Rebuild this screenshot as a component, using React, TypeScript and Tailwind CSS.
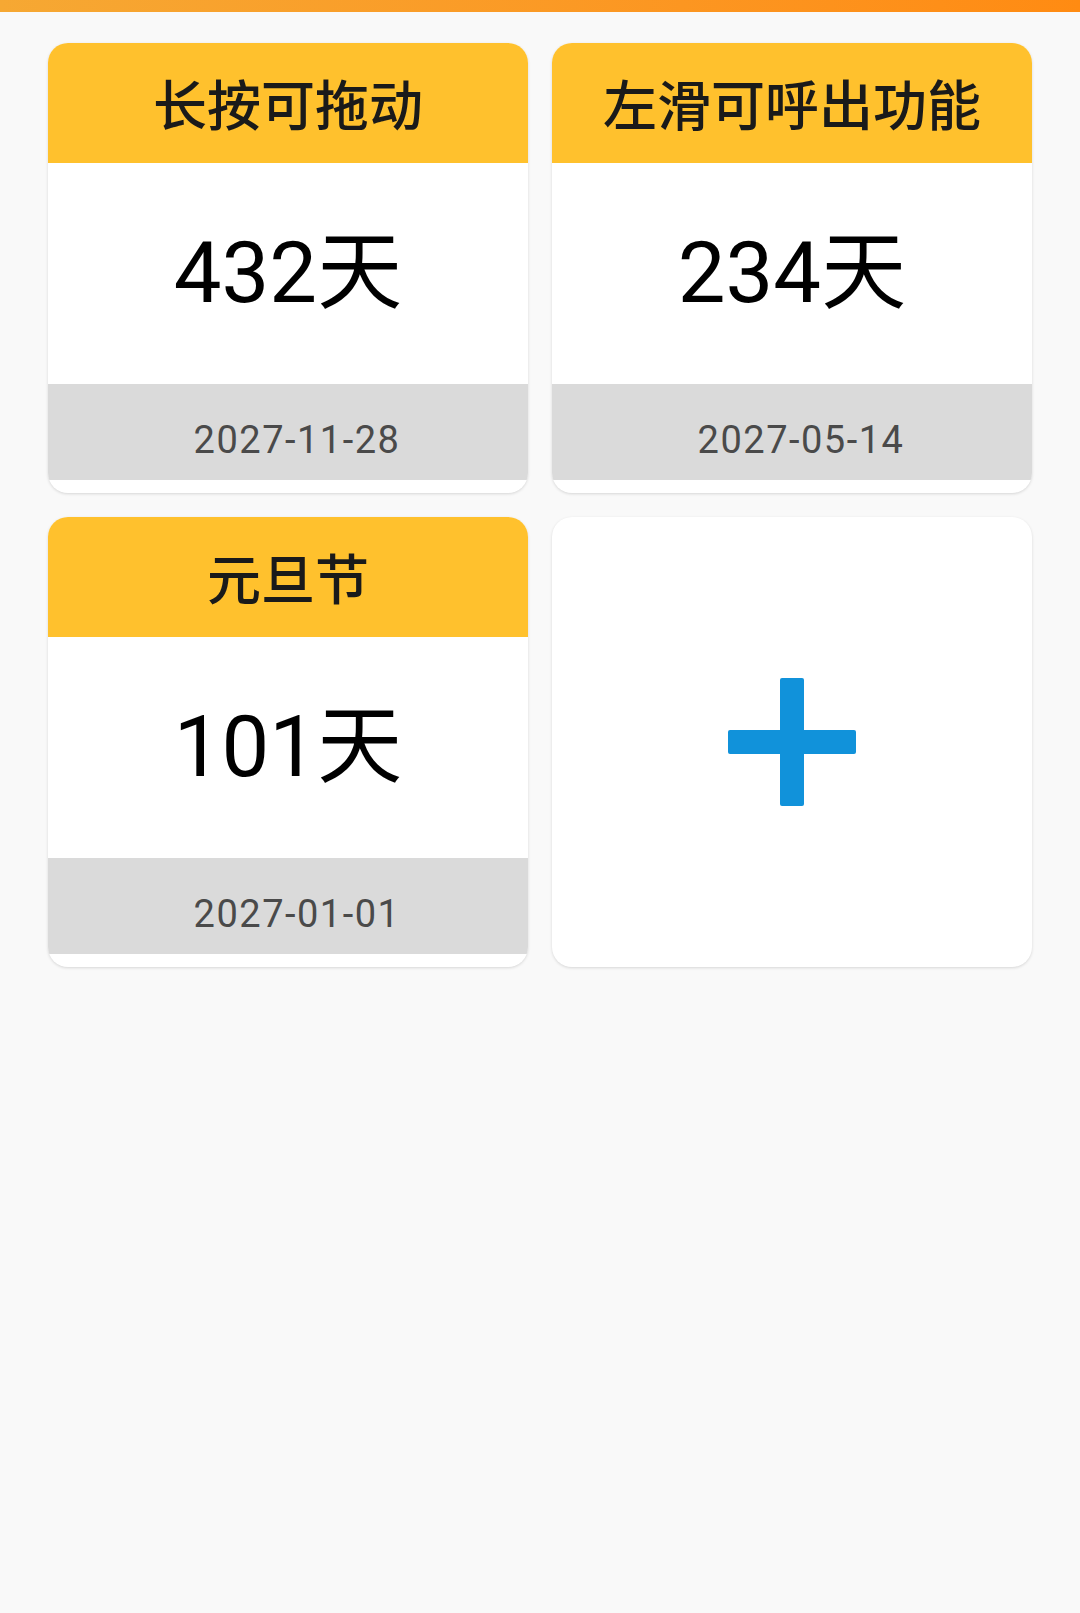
import React from "react";

type Countdown = {
  title: string;
  days: number;
  date: string;
};

const items: Countdown[] = [
  { title: "长按可拖动", days: 432, date: "2027-11-28" },
  { title: "左滑可呼出功能", days: 234, date: "2027-05-14" },
  { title: "元旦节", days: 101, date: "2027-01-01" },
];

function CountdownCard({ item }: { item: Countdown }) {
  return (
    <div className="flex h-[450px] flex-col overflow-hidden rounded-[20px] bg-white shadow-[0_1px_3px_rgba(0,0,0,0.14)]">
      <div className="flex h-[120px] items-center justify-center bg-[#ffc12d]">
        <span className="font-['Noto_Sans_CJK_SC',sans-serif] text-[54px] font-medium leading-none text-[#1a1a1a]">
          {item.title}
        </span>
      </div>
      <div className="flex h-[221px] items-center justify-center">
        <span className="font-['Roboto','Noto_Sans_CJK_SC',sans-serif] text-[85px] leading-none text-black">
          {item.days}天
        </span>
      </div>
      <div className="flex h-[96px] items-center justify-center bg-[#dadada] pl-[18px] pt-4">
        <span className="font-['Roboto','Noto_Sans',sans-serif] text-[38px] leading-none tracking-[1.5px] text-[#4a4a4a]">
          {item.date}
        </span>
      </div>
    </div>
  );
}

function AddCard() {
  return (
    <div className="flex h-[450px] items-center justify-center rounded-[20px] bg-white shadow-[0_1px_3px_rgba(0,0,0,0.14)]">
      <svg width="128" height="128" viewBox="0 0 128 128" fill="#1192da">
        <rect x="52" y="0" width="24" height="128" rx="2" />
        <rect x="0" y="52" width="128" height="24" rx="2" />
      </svg>
    </div>
  );
}

export default function App() {
  return (
    <div className="min-h-[1613px] bg-[#f9f9f9]">
      <div className="h-3 bg-gradient-to-r from-[#f6a833] to-[#ff8b12]" />
      <div className="grid grid-cols-2 gap-6 px-12 pt-[31px]">
        {items.map((item) => (
          <CountdownCard key={item.title} item={item} />
        ))}
        <AddCard />
      </div>
    </div>
  );
}
